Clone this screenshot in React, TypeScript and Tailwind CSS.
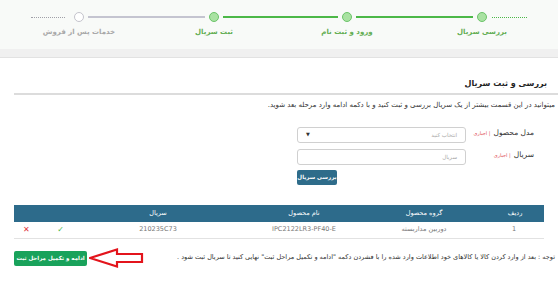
import React from 'react';

const font = { fontFamily: 'Tahoma, "DejaVu Sans", sans-serif' };

function Circle({ done }: { done: boolean }) {
  return (
    <div
      className={
        done
          ? 'w-[10px] h-[10px] shrink-0 rounded-full bg-[#a9e2a2] border border-[#6cc46a]'
          : 'w-[10px] h-[10px] shrink-0 rounded-full bg-white border border-[#c4c4cc]'
      }
    />
  );
}

function Label({ text, done }: { text: string; done: boolean }) {
  return (
    <div className="w-[10px] flex flex-col items-center">
      <span
        dir="rtl"
        className={
          done
            ? 'whitespace-nowrap text-[7px] font-bold text-[#62ad52]'
            : 'whitespace-nowrap text-[7px] font-bold text-[#a8a8a8]'
        }
      >
        {text}
      </span>
    </div>
  );
}

function Stepper() {
  return (
    <div className="h-[49px] bg-[#f8faf8] pt-[12px]">
      <div className="flex items-center pl-[31px]">
        <div className="w-[34px] border-t border-dotted border-[#a0a0a8]" />
        <div className="w-[9px]" />
        <Circle done={false} />
        <div className="mx-[4px] w-[117px] h-[1.5px] bg-[#c4c4d0]" />
        <Circle done />
        <div className="mx-[4px] w-[115px] h-[1.5px] bg-[#4cb848]" />
        <Circle done />
        <div className="mx-[4px] w-[117px] h-[1.5px] bg-[#4cb848]" />
        <Circle done />
        <div className="w-[5px]" />
        <div className="w-[35px] border-t border-dotted border-[#4cb848]" />
      </div>
      <div className="flex mt-[5px] pl-[74px]">
        <Label text="خدمات پس از فروش" done={false} />
        <div className="w-[125px]" />
        <Label text="ثبت سریال" done />
        <div className="w-[123px]" />
        <Label text="ورود و ثبت نام" done />
        <div className="w-[125px]" />
        <Label text="بررسی سریال" done />
      </div>
    </div>
  );
}

function Req() {
  return <span className="text-[5px] text-[#e0505a] mr-[3px]">| اجباری</span>;
}

function Arrow() {
  return (
    <svg width="56" height="20" viewBox="0 0 56 20" className="shrink-0">
      <polygon
        points="1,10 28,1.5 28,6 53,6 53,14 28,14 28,18.5"
        fill="white"
        stroke="#e3141c"
        strokeWidth="2.2"
        strokeLinejoin="miter"
      />
    </svg>
  );
}

export default function App() {
  return (
    <div className="w-[558px] h-[283px] bg-white overflow-hidden text-[#333]" style={font}>
      <Stepper />
      <div className="h-[9px] bg-[#f0f0f0] border-b border-[#e2e2e2]" />

      <div dir="rtl" className="pr-[11px] mt-[20px] text-[8px] font-bold leading-[12px] text-[#222]">
        بررسی و ثبت سریال
      </div>
      <div className="ml-[14px] mt-[3px] h-[2px] bg-[#dcdcdc]" />
      <div dir="rtl" className="pr-[3px] mt-[4px] text-[7px] leading-[12px] text-[#333]">
        میتوانید در این قسمت بیشتر از یک سریال بررسی و ثبت کنید و با دکمه ادامه وارد مرحله بعد شوید.
      </div>

      <div dir="rtl" className="mt-[16px] flex flex-col gap-[6px]">
        <div className="flex">
          <div className="w-[92px] pr-[24px] pt-[1px] text-[7.5px] leading-[10px] text-[#333] whitespace-nowrap">
            مدل محصول<Req />
          </div>
          <div className="w-[169px] h-[16px] rounded-[3px] border border-[#d0d0d0] flex items-center justify-between px-[8px]">
            <span className="text-[5.5px] text-[#a8a8a8]">انتخاب کنید</span>
            <span className="text-[5px] text-[#333]">▼</span>
          </div>
        </div>
        <div className="flex">
          <div className="w-[92px] pr-[24px] pt-[1px] text-[7.5px] leading-[10px] text-[#333] whitespace-nowrap">
            سریال<Req />
          </div>
          <div className="w-[169px] h-[16px] rounded-[3px] border border-[#d0d0d0] flex items-center px-[8px]">
            <span className="text-[5.5px] text-[#a8a8a8]">سریال</span>
          </div>
        </div>
        <div className="flex -mt-[1px]">
          <div className="w-[92px]" />
          <div className="w-[169px] flex justify-end">
            <div className="w-[40px] h-[15px] rounded-[2px] bg-[#2e6c8a] flex items-center justify-center text-[5.5px] font-bold text-white">
              بررسی سریال
            </div>
          </div>
        </div>
      </div>

      <div dir="rtl" className="mt-[20px] ml-[14px] w-[530px]">
        <div className="grid grid-cols-[58px_124px_116px_176px_56px] h-[17px] bg-[#2d6b8b] items-center text-[6.5px] text-white">
          <div className="text-center">ردیف</div>
          <div className="text-center">گروه محصول</div>
          <div className="text-center">نام محصول</div>
          <div className="text-center">سریال</div>
          <div />
        </div>
        <div className="grid grid-cols-[58px_124px_116px_176px_56px] h-[17px] items-center border-b border-[#e2e2e2] text-[6.5px] text-[#777]">
          <div className="text-center pr-[2px]">1</div>
          <div className="text-center">دوربین مداربسته</div>
          <div className="text-center" dir="ltr">IPC2122LR3-PF40-E</div>
          <div className="text-center" dir="ltr">210235C73</div>
          <div className="flex justify-between pr-[6px] pl-[9px]">
            <span className="text-[#4cb848] text-[8px] leading-none">✓</span>
            <span className="text-[#e0353d] text-[8px] leading-none">✕</span>
          </div>
        </div>
      </div>

      <div dir="rtl" className="mt-[9px] flex items-center">
        <div className="pr-[3px] text-[6.5px] text-[#333] whitespace-nowrap">
          توجه : بعد از وارد کردن کالا یا کالاهای خود اطلاعات وارد شده را با فشردن دکمه "ادامه و تکمیل مراحل ثبت" نهایی کنید تا سریال ثبت شود .
        </div>
        <div className="flex-1" />
        <Arrow />
        <div className="ml-[14px] mr-[2px] w-[73px] h-[15px] rounded-[2px] bg-[#19a25b] flex items-center justify-center text-[5.5px] font-bold text-white whitespace-nowrap">
          ادامه و تکمیل مراحل ثبت
        </div>
      </div>
    </div>
  );
}
